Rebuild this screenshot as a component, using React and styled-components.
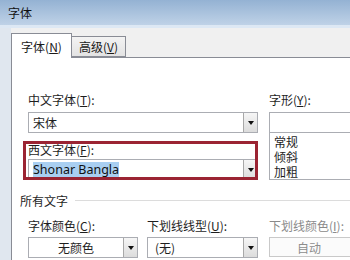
import React from "react"
import styled, { createGlobalStyle } from "styled-components"

const GlobalStyle = createGlobalStyle`
  html, body {
    margin: 0;
    padding: 0;
  }
  body {
    width: 350px;
    height: 260px;
    overflow: hidden;
    font-family: "Noto Sans CJK SC", "Noto Sans", sans-serif;
    font-size: 12px;
    color: #1e1e1e;
    background: #f0f0f0;
  }
`

const Key = ({ children }) => <u>{children}</u>

const Combo = ({ text, align, pad, selected }) => (
  <ComboBox>
    <ComboText $align={align} $pad={pad}>
      {selected ? <Selected>{text}</Selected> : text}
    </ComboText>
    <DropButton>
      <Arrow />
    </DropButton>
  </ComboBox>
)

const App = () => {
  return (
    <Window>
      <GlobalStyle />
      <TitleBar>字体</TitleBar>
      <Body>
        <Frame />
        <Main>
          <TabRow>
            <Tab $active>
              字体(<Key>N</Key>)
            </Tab>
            <Tab>
              高级(<Key>V</Key>)
            </Tab>
          </TabRow>
          <Panel>
            <TopGrid>
              <Column $width={230}>
                <Label>
                  中文字体(<Key>T</Key>):
                </Label>
                <Combo text="宋体" pad={4} />
                <Label $top={9} $gap={2}>
                  西文字体(<Key>F</Key>):
                </Label>
                <Combo text="Shonar Bangla" pad={4} selected />
              </Column>
              <Column $width={100} $left={11}>
                <Label>
                  字形(<Key>Y</Key>):
                </Label>
                <Input />
                <ListBox>
                  <ListItem>常规</ListItem>
                  <ListItem>倾斜</ListItem>
                  <ListItem>加粗</ListItem>
                </ListBox>
              </Column>
            </TopGrid>
            <GroupHeading>
              所有文字
              <GroupLine />
            </GroupHeading>
            <BottomRow>
              <Column $width={110}>
                <Label $gap={4}>
                  字体颜色(<Key>C</Key>):
                </Label>
                <Combo text="无颜色" align="center" />
              </Column>
              <Column $width={111} $left={9}>
                <Label $gap={4}>
                  下划线线型(<Key>U</Key>):
                </Label>
                <Combo text="(无)" pad={7} />
              </Column>
              <Column $width={100} $left={11}>
                <Label $gap={4} $disabled>
                  下划线颜色(<Key>I</Key>):
                </Label>
                <DisabledBox>
                  <DisabledText>自动</DisabledText>
                </DisabledBox>
              </Column>
            </BottomRow>
            <Highlight />
          </Panel>
        </Main>
      </Body>
    </Window>
  )
}

export default App

const Window = styled.div`
  width: 350px;
  height: 260px;
  display: flex;
  flex-direction: column;
  overflow: hidden;
`

const TitleBar = styled.div`
  flex: none;
  height: 25px;
  padding-left: 8px;
  display: flex;
  align-items: center;
  background: linear-gradient(#94b2d3, #bfd2e7);
  border-bottom: 3px solid #dde8f4;
  color: #111;
  font-size: 12px;
`

const Body = styled.div`
  flex: 1;
  display: flex;
  min-height: 0;
`

const Frame = styled.div`
  flex: none;
  width: 11px;
  background: #e0e7ef;
`

const Main = styled.div`
  flex: 1;
  display: flex;
  flex-direction: column;
  min-width: 0;
`

const TabRow = styled.div`
  flex: none;
  height: 29px;
  display: flex;
  align-items: flex-end;
  background: #f0f0f0;
`

const Tab = styled.div`
  position: relative;
  z-index: ${p => (p.$active ? 1 : 0)};
  box-sizing: border-box;
  height: ${p => (p.$active ? "25px" : "21px")};
  width: ${p => (p.$active ? "61px" : "55px")};
  margin-bottom: ${p => (p.$active ? "-1px" : "0")};
  margin-left: ${p => (p.$active ? "0" : "-1px")};
  display: flex;
  align-items: center;
  justify-content: center;
  border: 1px solid #898c95;
  border-bottom: ${p => (p.$active ? "none" : "1px solid #898c95")};
  background: ${p =>
    p.$active ? "#fff" : "linear-gradient(#f3f3f3, #e3e3e3)"};
  font-size: 12px;
  color: #1a1a1a;
`

const Panel = styled.div`
  position: relative;
  flex: 1;
  padding: 34px 0 0 16px;
  background: #fff;
  border-top: 1px solid #898c95;
  border-left: 1px solid #898c95;
`

const TopGrid = styled.div`
  display: flex;
`

const Column = styled.div`
  flex: none;
  width: ${p => p.$width}px;
  margin-left: ${p => p.$left || 0}px;
  display: flex;
  flex-direction: column;
`

const Label = styled.div`
  height: 15px;
  line-height: 15px;
  margin-top: ${p => p.$top || 0}px;
  margin-bottom: ${p => (p.$gap === undefined ? 5 : p.$gap)}px;
  white-space: nowrap;
  color: ${p => (p.$disabled ? "#8a8a8a" : "#1e1e1e")};
`

const ComboBox = styled.div`
  box-sizing: border-box;
  height: 21px;
  display: flex;
  align-items: stretch;
  border: 1px solid #abadb3;
  background: #fff;
`

const ComboText = styled.div`
  flex: 1;
  display: flex;
  align-items: center;
  justify-content: ${p => (p.$align === "center" ? "center" : "flex-start")};
  padding-left: ${p => p.$pad || 0}px;
  white-space: nowrap;
  overflow: hidden;
`

const Selected = styled.span`
  font-family: "Noto Sans", "DejaVu Sans", sans-serif;
  font-size: 12.5px;
  line-height: 15px;
  background: #a9cff1;
  color: #111;
`

const DropButton = styled.div`
  flex: none;
  box-sizing: border-box;
  width: 14px;
  margin: 0;
  display: flex;
  align-items: center;
  justify-content: center;
  border-left: 1px solid #a8a8a8;
  background: linear-gradient(#f6f6f6, #dcdcdc);
`

const Arrow = styled.div`
  width: 0;
  height: 0;
  border-left: 3.5px solid transparent;
  border-right: 3.5px solid transparent;
  border-top: 4px solid #111;
`

const Input = styled.div`
  box-sizing: border-box;
  height: 21px;
  border: 1px solid #abadb3;
`

const ListBox = styled.div`
  box-sizing: border-box;
  height: 47px;
  padding: 1px 0 0 4px;
  border: 1px solid #abadb3;
  border-top: none;
`

const ListItem = styled.div`
  height: 15px;
  line-height: 15px;
`

const GroupHeading = styled.div`
  margin: 13px 0 10px -8px;
  height: 15px;
  line-height: 15px;
  display: flex;
  align-items: center;
`

const GroupLine = styled.div`
  flex: 1;
  height: 1px;
  margin-left: 7px;
  background: #dcdcdc;
`

const BottomRow = styled.div`
  display: flex;
`

const DisabledBox = styled.div`
  box-sizing: border-box;
  height: 20px;
  display: flex;
  border: 1px solid #c9c9c9;
  background: #fbfbfb;
`

const DisabledText = styled.div`
  width: 78px;
  display: flex;
  align-items: center;
  justify-content: center;
  color: #8d8d8d;
`

const Highlight = styled.div`
  position: absolute;
  left: 11px;
  top: 83px;
  width: 235px;
  height: 39px;
  box-sizing: border-box;
  border: 3px solid #9b2433;
  pointer-events: none;
`
